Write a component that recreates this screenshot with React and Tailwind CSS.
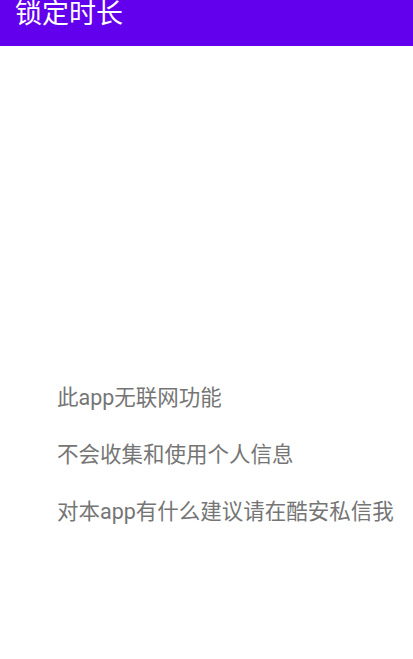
export default function App() {
  return (
    <div className="w-[413px] h-[659px] bg-white flex flex-col font-['Roboto','Noto_Sans_CJK_SC',sans-serif]">
      <div className="h-[46px] bg-[#6200ee] flex items-start pl-[15px]">
        <span className="text-white text-[27px] leading-[29px]">锁定时长</span>
      </div>
      <div className="flex flex-col pl-[57px] pt-[337px] gap-[27px] text-[#757575] text-[21.5px] leading-[30px]">
        <div>此app无联网功能</div>
        <div>不会收集和使用个人信息</div>
        <div>对本app有什么建议请在酷安私信我</div>
      </div>
    </div>
  );
}
